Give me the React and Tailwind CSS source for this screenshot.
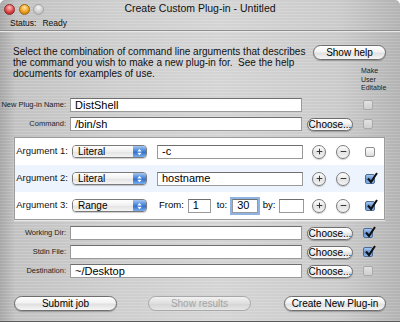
import React from 'react';

const font = { fontFamily: '"Liberation Sans", Arial, sans-serif' };

const metal =
  'bg-[repeating-linear-gradient(0deg,rgba(255,255,255,0.10)_0px,rgba(255,255,255,0.10)_1px,rgba(0,0,0,0.02)_1px,rgba(0,0,0,0.02)_3px),linear-gradient(to_right,#a9a9a9,#c6c6c6_4%,#d2d2d2_30%,#d8d8d8_55%,#cecece_85%,#b6b6b6)]';

const Pill = ({ children, className = '', disabled = false }) => (
  <div
    className={
      'flex items-center justify-center rounded-full border text-[10px] ' +
      (disabled
        ? 'border-[#a8a8a8] bg-[linear-gradient(#f2f2f2,#dedede_50%,#d4d4d4_51%,#e6e6e6)] text-[#a4a4a4] '
        : 'border-[#6e6e6e] bg-[linear-gradient(#ffffff,#f2f2f2_45%,#e0e0e0_55%,#f6f6f6)] text-black shadow-[0_1px_1px_rgba(0,0,0,0.25)] ') +
      className
    }
  >
    {children}
  </div>
);

const Checkbox = ({ checked = false, dim = false }) => (
  <div
    className={
      'relative w-[10px] h-[10px] rounded-[2px] border ' +
      (checked
        ? 'border-[#4c6b98] bg-[linear-gradient(#a9c8ee,#5f8fd0_55%,#8cb4e6)]'
        : dim
        ? 'border-[#a9a9a9] bg-[linear-gradient(#e2e2e2,#cfcfcf)]'
        : 'border-[#8d8d8d] bg-[linear-gradient(#ffffff,#dcdcdc)]')
    }
  >
    {checked && (
      <svg viewBox="0 0 12 12" className="absolute left-[0px] top-[-3px] w-[12px] h-[12px]">
        <path d="M2 6.5 L5 10 L11 1" fill="none" stroke="#111" strokeWidth="2" />
      </svg>
    )}
  </div>
);

const Field = ({ value = '', className = '', focus = false }) => (
  <div
    className={
      'h-[14px] bg-white border border-[#9a9a9a] border-t-[#6f6f6f] flex items-center pl-[4px] text-[11px] text-black leading-none ' +
      (focus ? 'shadow-[0_0_0_2px_#8fb3e3] border-[#5d86c4] ' : '') +
      className
    }
  >
    {value}
  </div>
);

const RoundBtn = ({ sign }) => (
  <div className="w-[14px] h-[14px] rounded-full border border-[#7d7d7d] bg-[linear-gradient(#ffffff,#e4e4e4_55%,#f4f4f4)] flex items-center justify-center shadow-[0_1px_1px_rgba(0,0,0,0.2)]">
    <svg viewBox="0 0 10 10" className="w-[7px] h-[7px]">
      <path d="M1 5 H9" stroke="#333" strokeWidth="1.4" />
      {sign === '+' && <path d="M5 1 V9" stroke="#333" strokeWidth="1.4" />}
    </svg>
  </div>
);

const Popup = ({ label }) => (
  <div className="w-[75px] h-[13px] rounded-[4px] border border-[#7a7a7a] flex overflow-hidden shadow-[0_1px_1px_rgba(0,0,0,0.2)]">
    <div className="flex-1 bg-[linear-gradient(#ffffff,#f0f0f0_50%,#e2e2e2_51%,#f4f4f4)] text-[10px] pl-[5px] flex items-center leading-none">
      {label}
    </div>
    <div className="w-[13px] bg-[linear-gradient(#a6c6f0,#3c7fd8_50%,#2a68c8_51%,#79aef0)] flex items-center justify-center">
      <svg viewBox="0 0 8 10" className="w-[5px] h-[8px]">
        <path d="M4 0 L7.5 4 H0.5 Z" fill="#fff" />
        <path d="M4 10 L7.5 6 H0.5 Z" fill="#fff" />
      </svg>
    </div>
  </div>
);

const FormRow = ({ label, value, choose, checkbox, dim, className = '' }) => (
  <div className={'flex items-center ' + className}>
    <div className="w-[67px] text-right text-[7.5px] text-[#222] pr-[1px]">{label}</div>
    <Field value={value} className="ml-[3px] w-[232px]" />
    <div className="w-[46px] ml-[5px]">
      {choose && <Pill className="h-[13px] text-[8.5px]">Choose...</Pill>}
    </div>
    <div className="ml-[10px]">
      <Checkbox checked={checkbox} dim={dim} />
    </div>
  </div>
);

const ArgRow = ({ n, type, children, checked, className = '' }) => (
  <div className={'flex items-center h-[27px] ' + className}>
    <div className="w-[53px] text-right text-[9.5px] text-[#111]">Argument {n}:</div>
    <div className="ml-[4px]">
      <Popup label={type} />
    </div>
    <div className="ml-[10px] w-[147px] flex items-center">{children}</div>
    <div className="ml-[8px]">
      <RoundBtn sign="+" />
    </div>
    <div className="ml-[10px]">
      <RoundBtn sign="-" />
    </div>
    <div className="ml-[15px]">
      <Checkbox checked={checked} />
    </div>
  </div>
);

export default function App() {
  return (
    <div
      style={font}
      className={'w-[400px] h-[322px] overflow-hidden rounded-t-[5px] flex flex-col border-b border-[#5a5a5a] ' + metal}
    >
      {/* title bar */}
      <div className="grid grid-cols-[60px_1fr_60px] items-center h-[17px] shrink-0">
        <div className="flex items-center gap-[3.5px] pl-[4px] pt-[2px]">
          <div className="w-[11px] h-[11px] rounded-full border border-[#8a2a2a] bg-[radial-gradient(circle_at_50%_30%,#ffc0c0,#e04848_55%,#a01818)]" />
          <div className="w-[11px] h-[11px] rounded-full border border-[#9a6a10] bg-[radial-gradient(circle_at_50%_30%,#ffe4a0,#f0a020_55%,#b86800)]" />
          <div className="w-[11px] h-[11px] rounded-full border border-[#a0a0a0] bg-[radial-gradient(circle_at_50%_30%,#f4f4f4,#d0d0d0_55%,#b0b0b0)]" />
        </div>
        <div className="text-center text-[10.5px] text-[#111] pt-[1px]">Create Custom Plug-in - Untitled</div>
        <div />
      </div>
      {/* status */}
      <div className="h-[12px] pl-[10px] text-[8.5px] text-[#111] flex items-center gap-[6px] shrink-0">
        <span>Status:</span>
        <span>Ready</span>
      </div>
      <div className="h-[2px] border-t border-[#8e8e8e] border-b border-b-[#e8e8e8] mt-[1px] shrink-0" />

      {/* intro */}
      <div className="flex pl-[13px] pr-[14px] mt-[13px] h-[52px] shrink-0">
        <div className="flex-1 text-[10px] leading-[11px] text-[#111] pt-[1px]">
          Select the combination of command line arguments that describes the command you wish to make a new plug-in for.&nbsp; See the help documents for examples of use.
        </div>
        <div className="w-[73px] flex flex-col items-end">
          <Pill className="w-[73px] h-[15px] text-[10.5px]">Show help</Pill>
          <div className="w-[25px] mt-[7px] text-[7px] leading-[8.5px] text-[#222]">
            Make
            <br />
            User
            <br />
            Editable
          </div>
        </div>
      </div>

      <FormRow label="New Plug-in Name:" value="DistShell" dim className="mt-[1px]" />
      <FormRow label="Command:" value="/bin/sh" choose dim className="mt-[5px]" />

      {/* arguments panel */}
      <div className="ml-[14px] w-[371px] mt-[6px] bg-white border border-[#9c9c9c] shadow-[0_1px_1px_rgba(255,255,255,0.6)] shrink-0">
        <ArgRow n={1} type="Literal">
          <Field value="-c" className="w-[146px]" />
        </ArgRow>
        <ArgRow n={2} type="Literal" checked className="bg-[#eef4fd]">
          <Field value="hostname" className="w-[146px]" />
        </ArgRow>
        <ArgRow n={3} type="Range" checked>
          <span className="text-[9.5px] ml-[2px]">From:</span>
          <Field value="1" className="ml-[4px] w-[25px]" />
          <span className="text-[9.5px] ml-[6px]">to:</span>
          <Field value="30" focus className="ml-[5px] w-[28px]" />
          <span className="text-[9.5px] ml-[5px]">by:</span>
          <Field value="" className="ml-[4px] w-[27px]" />
        </ArgRow>
      </div>

      <FormRow label="Working Dir:" value="" choose checkbox className="mt-[6px]" />
      <FormRow label="Stdin File:" value="" choose checkbox className="mt-[5px]" />
      <FormRow label="Destination:" value="~/Desktop" choose dim className="mt-[5px]" />

      {/* bottom buttons */}
      <div className="flex items-center pl-[14px] pr-[14px] mt-[18px]">
        <Pill className="w-[103px] h-[15px] text-[10.5px]">Submit job</Pill>
        <Pill disabled className="ml-[31px] w-[103px] h-[15px] text-[10.5px]">Show results</Pill>
        <div className="flex-1" />
        <Pill className="w-[102px] h-[15px] text-[10.5px]">Create New Plug-in</Pill>
      </div>
    </div>
  );
}
